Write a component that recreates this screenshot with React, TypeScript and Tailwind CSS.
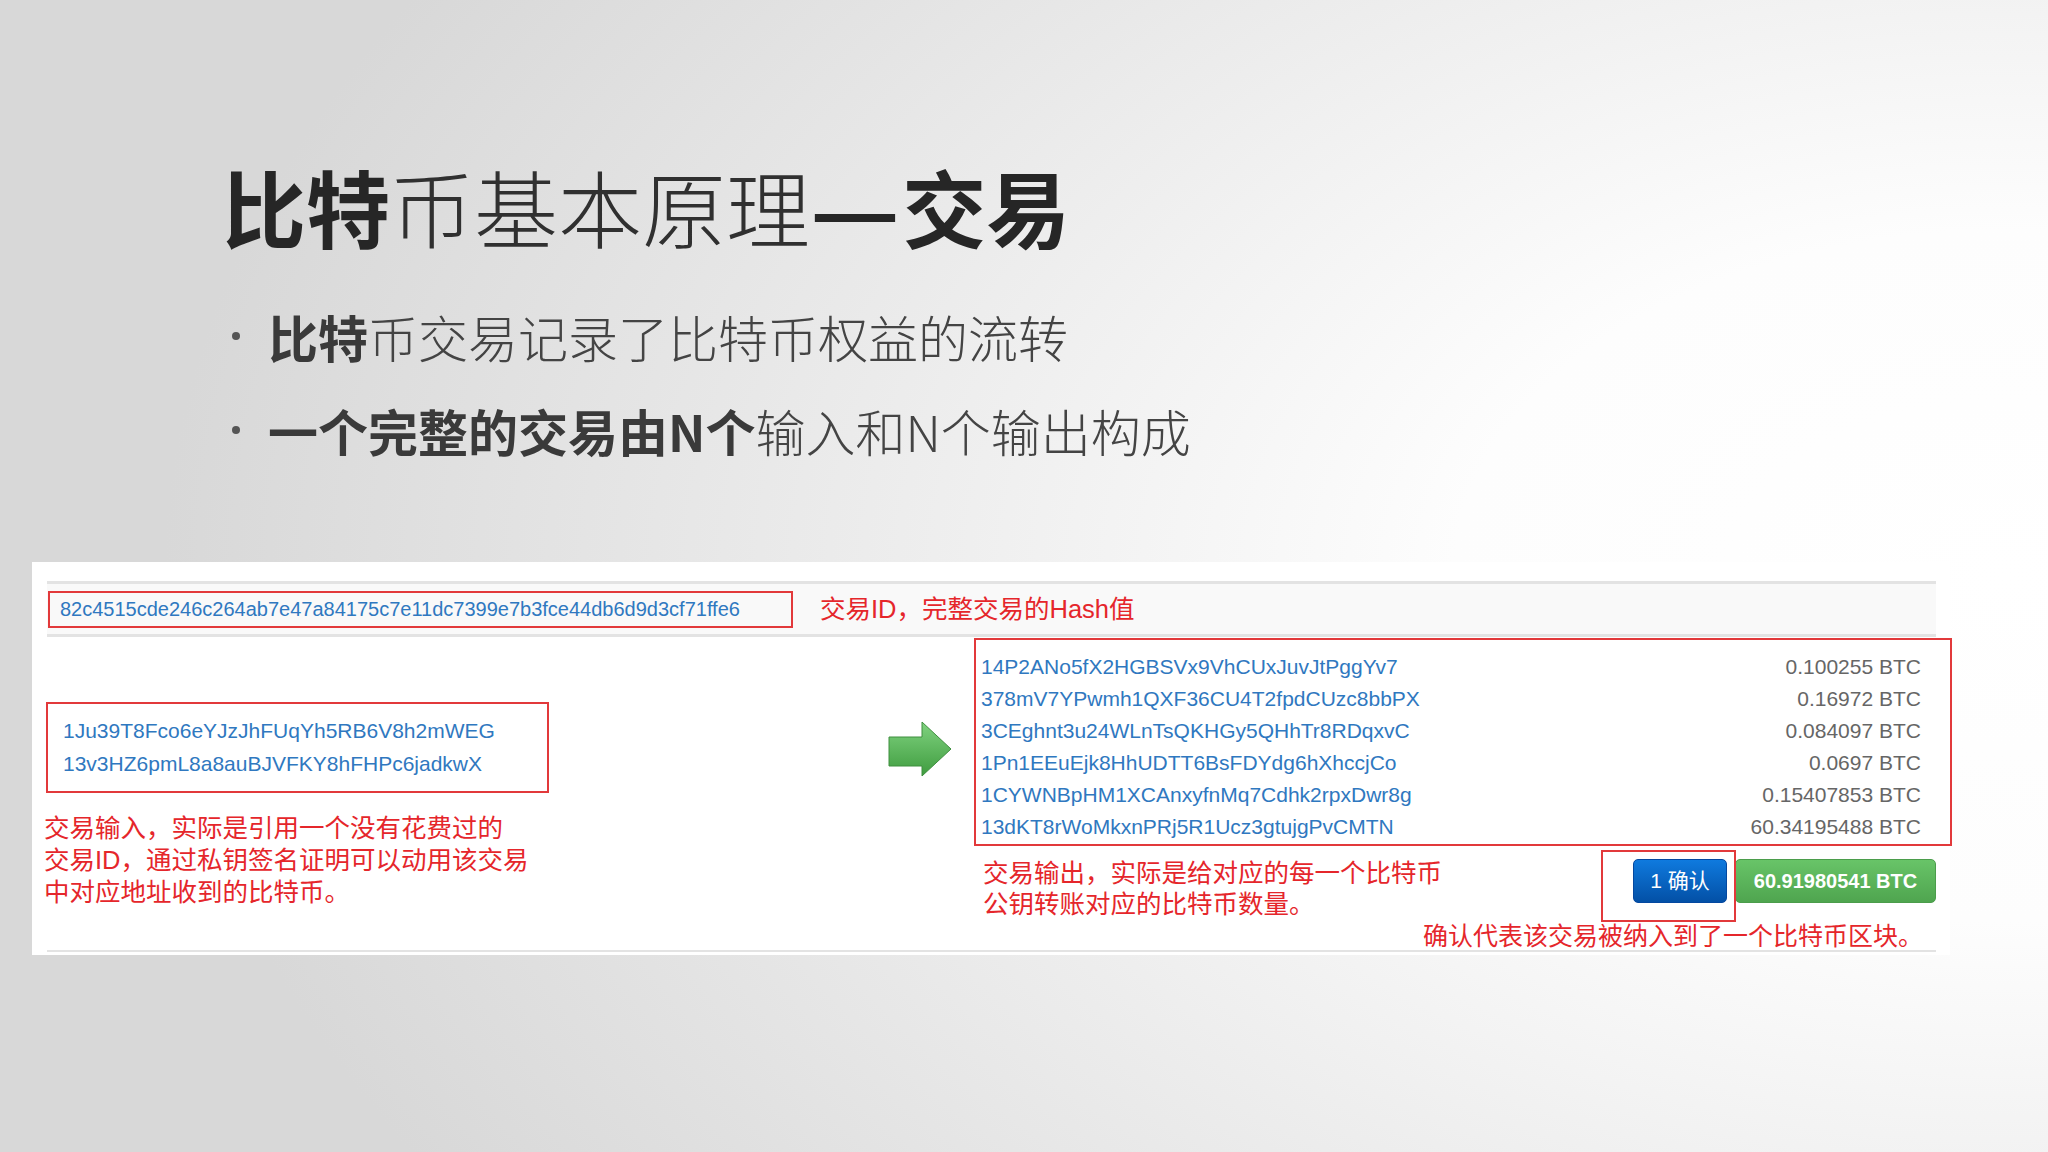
const outputs = [
  ["14P2ANo5fX2HGBSVx9VhCUxJuvJtPggYv7", "0.100255 BTC"],
  ["378mV7YPwmh1QXF36CU4T2fpdCUzc8bbPX", "0.16972 BTC"],
  ["3CEghnt3u24WLnTsQKHGy5QHhTr8RDqxvC", "0.084097 BTC"],
  ["1Pn1EEuEjk8HhUDTT6BsFDYdg6hXhccjCo", "0.0697 BTC"],
  ["1CYWNBpHM1XCAnxyfnMq7Cdhk2rpxDwr8g", "0.15407853 BTC"],
  ["13dKT8rWoMkxnPRj5R1Ucz3gtujgPvCMTN", "60.34195488 BTC"],
];

function Arrow() {
  return (
    <svg viewBox="0 0 64 56" className="w-[64px] h-[56px] shrink-0 mt-[84px]">
      <defs>
        <linearGradient id="ag" x1="0" y1="0" x2="0" y2="1">
          <stop offset="0" stopColor="#7fd27f" />
          <stop offset="1" stopColor="#3f9c3f" />
        </linearGradient>
      </defs>
      <path
        d="M1 16 H34 V1 L63 28 L34 55 V45 H1 Z"
        fill="url(#ag)"
        stroke="#3f8f3f"
        strokeWidth="1"
        strokeLinejoin="round"
      />
    </svg>
  );
}

export default function App() {
  return (
    <div className="w-[2048px] h-[1152px] overflow-hidden bg-[radial-gradient(ellipse_90%_100%_at_98%_50%,#ffffff_0%,#fdfdfd_30%,#ececec_62%,#d8d8d8_100%)] font-['Liberation_Sans','Noto_Sans_CJK_SC',sans-serif] pt-[164px]">
      <div className="pl-[222px] font-['Noto_Sans_CJK_SC',sans-serif]">
        <h1 className="text-[84px] leading-[84px] font-light text-[#303030]">
          <span className="font-bold text-[#262626]">比特</span>币基本原理
          <span className="font-bold text-[#262626]">
            <span className="inline-block scale-x-[1.18] origin-left mr-[16px]">—</span>交易
          </span>
        </h1>
        <div className="mt-[63px] flex items-center text-[50px] leading-[50px] font-light text-[#444]">
          <span className="w-[8px] h-[8px] rounded-full bg-[#555] ml-[10px] mr-[28px]" />
          <span>
            <span className="font-bold text-[#3a3a3a]">比特</span>币交易记录了比特币权益的流转
          </span>
        </div>
        <div className="mt-[44px] flex items-center text-[50px] leading-[50px] font-light text-[#444]">
          <span className="w-[8px] h-[8px] rounded-full bg-[#555] ml-[10px] mr-[28px]" />
          <span>
            <span className="font-bold text-[#3a3a3a]">一个完整的交易由N个</span>输入和N个输出构成
          </span>
        </div>
      </div>

      <div className="ml-[32px] mt-[107px] w-[1918px] h-[393px] bg-white pt-[19px] pl-[15px]">
        <div className="w-[1889px] h-[56px] flex items-center bg-[#f9f9f9] border-y-[3px] border-[#e3e3e3]">
          <div className="ml-px w-[745px] h-[37px] border-2 border-[#e2393b] flex items-center pl-[10px] text-[20px] text-[#2f78c0]">
            82c4515cde246c264ab7e47a84175c7e11dc7399e7b3fce44db6d9d3cf71ffe6
          </div>
          <div className="ml-[27px] text-[25.5px] text-[#e5262b]">交易ID，完整交易的Hash值</div>
        </div>

        <div className="w-[1889px] h-[315px] border-b-2 border-[#e3e3e3] flex">
          <div className="w-[841px] shrink-0 pt-[65px]">
            <div className="-ml-px w-[503px] h-[91px] border-2 border-[#e2393b] pt-[10px] pl-[15px] text-[21px] leading-[33px] text-[#2f78c0]">
              <div>1Ju39T8Fco6eYJzJhFUqYh5RB6V8h2mWEG</div>
              <div>13v3HZ6pmL8a8auBJVFKY8hFHPc6jadkwX</div>
            </div>
            <div className="mt-[19px] -ml-[3px] text-[25.5px] leading-[32px] text-[#e5262b]">
              <div>交易输入，实际是引用一个没有花费过的</div>
              <div>交易ID，通过私钥签名证明可以动用该交易</div>
              <div>中对应地址收到的比特币。</div>
            </div>
          </div>

          <Arrow />

          <div className="relative w-[978px] shrink-0 ml-[22px] pt-px">
            <div className="border-2 border-[#e2393b] pt-[11px] pb-px pl-[5px] pr-[29px] text-[21px] leading-[32px]">
              {outputs.map(([addr, amt]) => (
                <div key={addr} className="flex justify-between">
                  <span className="text-[#2f78c0]">{addr}</span>
                  <span className="text-[#666]">{amt}</span>
                </div>
              ))}
            </div>

            <div className="mt-[12px] flex justify-between pr-[16px]">
              <div className="pl-[9px] text-[25.5px] leading-[31px] text-[#e5262b]">
                <div>交易输出，实际是给对应的每一个比特币</div>
                <div>公钥转账对应的比特币数量。</div>
              </div>
              <div className="flex gap-[8px] mt-px h-[44px]">
                <div className="w-[94px] h-[44px] rounded-[5px] border border-[#0448a0] bg-[linear-gradient(#0f7ade,#0350a6)] flex items-center justify-center text-white text-[21px]">
                  1 确认
                </div>
                <div className="w-[201px] h-[44px] rounded-[5px] border border-[#4b9d4b] bg-[linear-gradient(#68c468,#4fa54f)] flex items-center justify-center text-white text-[20px] font-bold">
                  60.91980541 BTC
                </div>
              </div>
            </div>
            <div className="text-right pr-[29px] text-[25px] leading-[32px] text-[#e5262b]">
              确认代表该交易被纳入到了一个比特币区块。
            </div>

            <div className="absolute left-[627px] top-[213px] w-[135px] h-[72px] border-2 border-[#e2393b]" />
          </div>
        </div>
      </div>
    </div>
  );
}
